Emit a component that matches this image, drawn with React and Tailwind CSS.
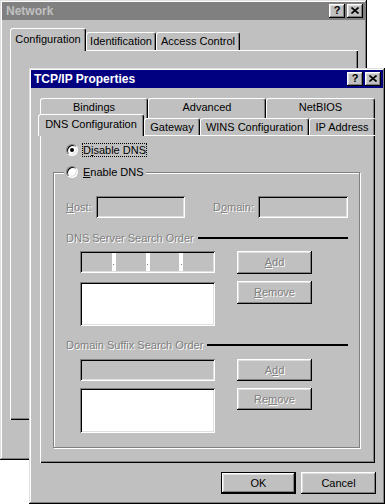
import React from 'react';

// win95 bevels
const RAISED = 'shadow-[inset_-1px_-1px_#000,inset_1px_1px_#fff,inset_-2px_-2px_#808080,inset_2px_2px_#dfdfdf]';
const SUNKEN = 'shadow-[inset_1px_1px_#808080,inset_-1px_-1px_#fff,inset_2px_2px_#000,inset_-2px_-2px_#dfdfdf]';
const FRAME = 'shadow-[inset_-1px_-1px_#000,inset_1px_1px_#dfdfdf,inset_-2px_-2px_#808080,inset_2px_2px_#fff]';
const DIM = 'text-[#808080] [text-shadow:1px_1px_0_#fff]';
const TAB = 'flex justify-center bg-[#c0c0c0] border-l border-t border-white border-r border-r-black rounded-t-[3px] shadow-[inset_-1px_0_#808080] whitespace-nowrap';

const CapButtons = () => (
  <div className="flex gap-[2px]">
    <div className={`w-[16px] h-[14px] bg-[#c0c0c0] ${RAISED} flex items-center justify-center text-[11px] font-bold leading-none text-black pb-px`}>?</div>
    <div className={`w-[16px] h-[14px] bg-[#c0c0c0] ${RAISED} flex items-center justify-center pb-px`}>
      <svg width="8" height="7" viewBox="0 0 8 7">
        <path d="M0.5 0.5L7.5 6.5M7.5 0.5L0.5 6.5" stroke="#000" strokeWidth="1.6" />
      </svg>
    </div>
  </div>
);

const Radio = ({ checked }) => (
  <div className="w-[12px] h-[12px] shrink-0 rounded-full bg-white border border-t-[#808080] border-l-[#808080] border-b-white border-r-white shadow-[inset_1px_1px_#000,inset_-1px_-1px_#dfdfdf] flex items-center justify-center">
    {checked && <div className="w-[4px] h-[4px] rounded-full bg-black" />}
  </div>
);

const Btn = ({ className, children }) => (
  <div className={`bg-[#c0c0c0] ${RAISED} flex items-center justify-center ${DIM} ${className}`}>{children}</div>
);

const SectionLabel = ({ className, children }) => (
  <div className={`flex items-center h-[14px] ${className}`}>
    <span className={`${DIM} whitespace-nowrap`}>{children}</span>
    <div className="flex-1 ml-[4px] h-[2px] bg-black" />
  </div>
);

const IpField = () => (
  <div className={`h-[22px] bg-[#c0c0c0] ${SUNKEN} flex items-stretch p-[2px]`}>
    {[0, 1, 2, 3].map(i => (
      <React.Fragment key={i}>
        {i > 0 && (
          <div className="w-[4px] bg-white flex items-center justify-center">
            <div className="w-[1px] h-[1px] bg-[#808080] mt-[5px]" />
          </div>
        )}
        <div className="flex-1" />
      </React.Fragment>
    ))}
  </div>
);

export default function App() {
  return (
    <div className="relative w-[385px] h-[504px] overflow-hidden bg-white font-['Liberation_Sans',Arial,sans-serif] text-[11px] leading-[13px] text-black">
      {/* Network window (inactive, behind) */}
      <div className={`absolute left-0 top-0 w-[367px] h-[460px] bg-[#c0c0c0] ${FRAME} p-[2px]`}>
        <div className="h-[18px] bg-[#808080] flex items-center justify-between pl-[4px] pr-[2px]">
          <span className="text-[12px] font-bold text-[#c0c0c0]">Network</span>
          <CapButtons />
        </div>
        <div className="px-[8px] pt-[8px]">
          <div className="flex items-end h-[22px]">
            <div className={`${TAB} relative z-10 -mb-px w-[76px] h-[23px] items-center pb-[2px]`}>Configuration</div>
            <div className={`${TAB} w-[70px] h-[18px] items-center`}>Identification</div>
            <div className={`${TAB} w-[84px] h-[18px] items-center`}>Access Control</div>
          </div>
          <div className="w-[348px] h-[370px] shadow-[inset_1px_1px_#fff,inset_-1px_-1px_#000,inset_-2px_-2px_#808080]" />
        </div>
      </div>

      {/* TCP/IP Properties window */}
      <div className={`absolute left-[29px] top-[68px] w-[356px] h-[436px] bg-[#c0c0c0] ${FRAME} p-[2px]`}>
        <div className="h-[18px] bg-[#000080] flex items-center justify-between pl-[3px] pr-[2px]">
          <span className="text-[12px] font-bold text-white">TCP/IP Properties</span>
          <CapButtons />
        </div>

        <div className="pl-[9px] pt-[10px]">
          <div className="flex h-[20px]">
            <div className={`${TAB} w-[108px] h-[20px] items-start pt-[2px]`}>Bindings</div>
            <div className={`${TAB} w-[118px] h-[20px] items-start pt-[2px]`}>Advanced</div>
            <div className={`${TAB} w-[109px] h-[20px] items-start pt-[2px]`}>NetBIOS</div>
          </div>
          <div className="relative z-10 flex items-end h-[21px] -mt-[4px]">
            <div className={`${TAB} -ml-[2px] -mb-px w-[106px] h-[22px] items-center pb-[2px]`}>DNS Configuration</div>
            <div className={`${TAB} w-[56px] h-[17px] items-center`}>Gateway</div>
            <div className={`${TAB} w-[109px] h-[17px] items-center`}>WINS Configuration</div>
            <div className={`${TAB} w-[66px] h-[17px] items-center`}>IP Address</div>
          </div>

          <div className="w-[335px] h-[328px] pl-[13px] pr-[15px] pt-[8px] shadow-[inset_1px_1px_#fff,inset_-1px_-1px_#000,inset_-2px_-2px_#808080]">
            <div className="flex items-center h-[14px] ml-[13px]">
              <Radio checked />
              <span className="ml-[4px] border border-dotted border-black leading-[12px]">
                D<span className="underline">i</span>sable DNS
              </span>
            </div>

            <fieldset className="mt-[8px] border border-[#808080] shadow-[inset_1px_1px_#fff,1px_1px_#fff] pl-[12px] pr-[11px] pt-[17px] pb-[14px]">
              <legend className="-ml-[2px] px-[2px] bg-[#c0c0c0]">
                <div className="flex items-center h-[14px] gap-[5px]">
                  <Radio />
                  <span><span className="underline">E</span>nable DNS</span>
                </div>
              </legend>

              <div className="flex items-center h-[22px]">
                <span className={`${DIM} w-[30px]`}><span className="underline">H</span>ost:</span>
                <div className={`w-[89px] h-[22px] bg-[#c0c0c0] ${SUNKEN}`} />
                <span className={`${DIM} ml-[28px] w-[45px]`}>D<span className="underline">o</span>main:</span>
                <div className={`w-[90px] h-[22px] bg-[#c0c0c0] ${SUNKEN}`} />
              </div>

              <SectionLabel className="mt-[13px]">DNS Server Search Order</SectionLabel>
              <div className="flex mt-[6px]">
                <div className="ml-[14px] w-[135px] flex flex-col">
                  <IpField />
                  <div className={`mt-[9px] h-[44px] bg-white ${SUNKEN}`} />
                </div>
                <div className="ml-[22px] w-[75px] flex flex-col">
                  <Btn className="h-[23px]"><span className="underline">A</span>dd</Btn>
                  <Btn className="mt-[7px] h-[23px]"><span className="underline">R</span>emove</Btn>
                </div>
              </div>

              <SectionLabel className="mt-[12px]">Domain Suffix Search Order</SectionLabel>
              <div className="flex mt-[7px]">
                <div className="ml-[14px] w-[135px] flex flex-col">
                  <div className={`h-[22px] bg-[#c0c0c0] ${SUNKEN}`} />
                  <div className={`mt-[7px] h-[45px] bg-white ${SUNKEN}`} />
                </div>
                <div className="ml-[22px] w-[75px] flex flex-col">
                  <Btn className="h-[22px]">A<span className="underline">d</span>d</Btn>
                  <Btn className="mt-[7px] h-[22px]">Re<span className="underline">m</span>ove</Btn>
                </div>
              </div>
            </fieldset>
          </div>
        </div>

        <div className="flex justify-end gap-[5px] pr-[7px] pt-[9px]">
          <div className="w-[75px] h-[22px] border border-black">
            <div className={`w-full h-full bg-[#c0c0c0] ${RAISED} flex items-center justify-center`}>OK</div>
          </div>
          <div className={`w-[75px] h-[22px] bg-[#c0c0c0] ${RAISED} flex items-center justify-center`}>Cancel</div>
        </div>
      </div>
    </div>
  );
}
